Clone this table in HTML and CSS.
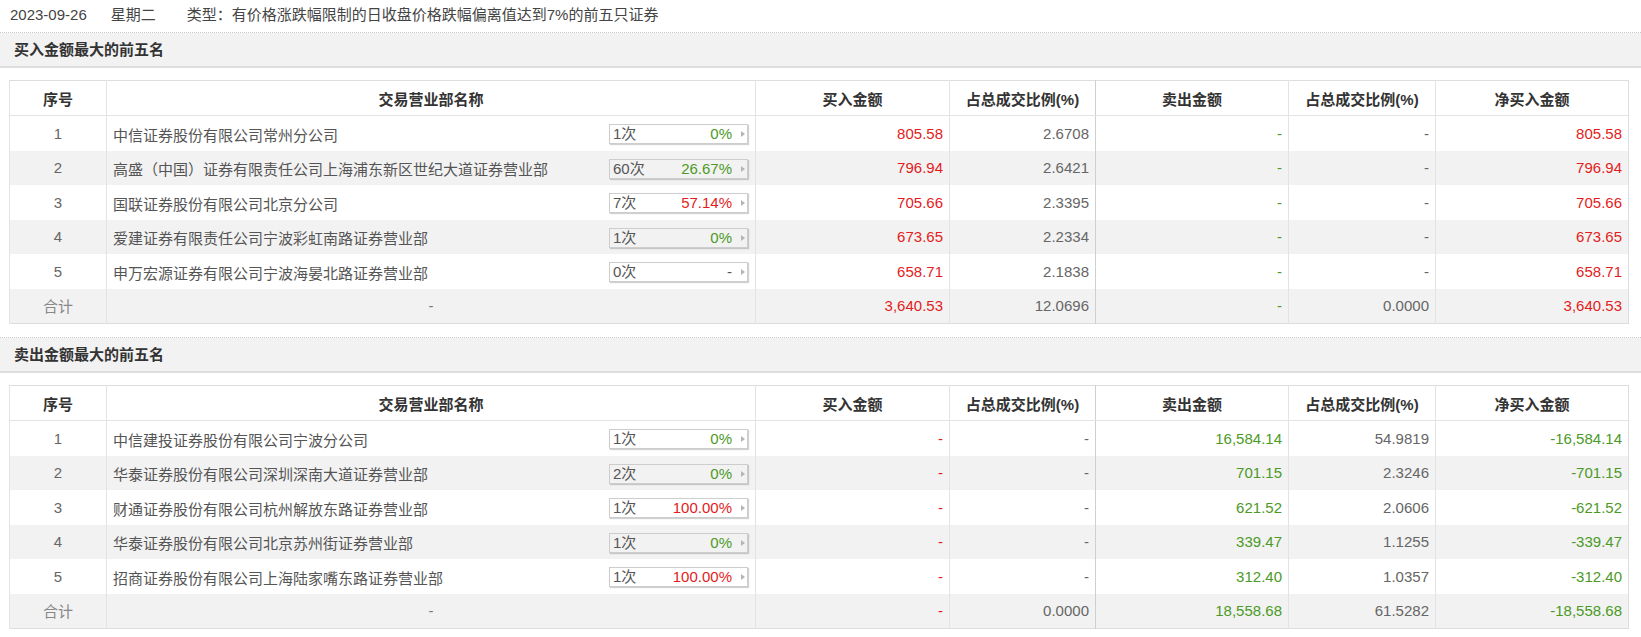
FILE: index.html
```html
<!DOCTYPE html>
<html lang="zh-CN">
<head>
<meta charset="utf-8">
<title>龙虎榜</title>
<link rel="stylesheet" href="styles.css">
</head>
<body>
<div class="topline">
  <span class="date">2023-09-26</span>
  <span class="week">星期二</span>
  <span class="type">类型：有价格涨跌幅限制的日收盘价格跌幅偏离值达到7%的前五只证券</span>
</div>

<section class="section">
  <h2 class="section-title">买入金额最大的前五名</h2>
  <div class="table-wrap">
    <table class="lhb">
      <colgroup>
        <col class="c-no"><col class="c-name"><col class="c-amt"><col class="c-pct"><col class="c-amt2"><col class="c-pct2"><col class="c-net">
      </colgroup>
      <thead>
        <tr><th>序号</th><th>交易营业部名称</th><th>买入金额</th><th class="sep">占总成交比例(%)</th><th>卖出金额</th><th>占总成交比例(%)</th><th>净买入金额</th></tr>
      </thead>
      <tbody>
        <tr>
          <td class="no">1</td>
          <td class="name"><div class="name-in"><span>中信证券股份有限公司常州分公司</span><span class="btn"><span class="cnt">1次</span><span class="rate up-g">0%</span><i class="arr"></i></span></div></td>
          <td class="num red">805.58</td><td class="num sep">2.6708</td><td class="num green">-</td><td class="num">-</td><td class="num red">805.58</td>
        </tr>
        <tr class="alt">
          <td class="no">2</td>
          <td class="name"><div class="name-in"><span>高盛（中国）证券有限责任公司上海浦东新区世纪大道证券营业部</span><span class="btn"><span class="cnt">60次</span><span class="rate up-g">26.67%</span><i class="arr"></i></span></div></td>
          <td class="num red">796.94</td><td class="num sep">2.6421</td><td class="num green">-</td><td class="num">-</td><td class="num red">796.94</td>
        </tr>
        <tr>
          <td class="no">3</td>
          <td class="name"><div class="name-in"><span>国联证券股份有限公司北京分公司</span><span class="btn"><span class="cnt">7次</span><span class="rate up-r">57.14%</span><i class="arr"></i></span></div></td>
          <td class="num red">705.66</td><td class="num sep">2.3395</td><td class="num green">-</td><td class="num">-</td><td class="num red">705.66</td>
        </tr>
        <tr class="alt">
          <td class="no">4</td>
          <td class="name"><div class="name-in"><span>爱建证券有限责任公司宁波彩虹南路证券营业部</span><span class="btn"><span class="cnt">1次</span><span class="rate up-g">0%</span><i class="arr"></i></span></div></td>
          <td class="num red">673.65</td><td class="num sep">2.2334</td><td class="num green">-</td><td class="num">-</td><td class="num red">673.65</td>
        </tr>
        <tr>
          <td class="no">5</td>
          <td class="name"><div class="name-in"><span>申万宏源证券有限公司宁波海晏北路证券营业部</span><span class="btn"><span class="cnt">0次</span><span class="rate">-</span><i class="arr"></i></span></div></td>
          <td class="num red">658.71</td><td class="num sep">2.1838</td><td class="num green">-</td><td class="num">-</td><td class="num red">658.71</td>
        </tr>
        <tr class="alt total">
          <td class="no">合计</td>
          <td class="center">-</td>
          <td class="num red">3,640.53</td><td class="num sep">12.0696</td><td class="num green">-</td><td class="num">0.0000</td><td class="num red">3,640.53</td>
        </tr>
      </tbody>
    </table>
  </div>
</section>

<section class="section">
  <h2 class="section-title">卖出金额最大的前五名</h2>
  <div class="table-wrap">
    <table class="lhb">
      <colgroup>
        <col class="c-no"><col class="c-name"><col class="c-amt"><col class="c-pct"><col class="c-amt2"><col class="c-pct2"><col class="c-net">
      </colgroup>
      <thead>
        <tr><th>序号</th><th>交易营业部名称</th><th>买入金额</th><th class="sep">占总成交比例(%)</th><th>卖出金额</th><th>占总成交比例(%)</th><th>净买入金额</th></tr>
      </thead>
      <tbody>
        <tr>
          <td class="no">1</td>
          <td class="name"><div class="name-in"><span>中信建投证券股份有限公司宁波分公司</span><span class="btn"><span class="cnt">1次</span><span class="rate up-g">0%</span><i class="arr"></i></span></div></td>
          <td class="num red">-</td><td class="num sep">-</td><td class="num green">16,584.14</td><td class="num">54.9819</td><td class="num green">-16,584.14</td>
        </tr>
        <tr class="alt">
          <td class="no">2</td>
          <td class="name"><div class="name-in"><span>华泰证券股份有限公司深圳深南大道证券营业部</span><span class="btn"><span class="cnt">2次</span><span class="rate up-g">0%</span><i class="arr"></i></span></div></td>
          <td class="num red">-</td><td class="num sep">-</td><td class="num green">701.15</td><td class="num">2.3246</td><td class="num green">-701.15</td>
        </tr>
        <tr>
          <td class="no">3</td>
          <td class="name"><div class="name-in"><span>财通证券股份有限公司杭州解放东路证券营业部</span><span class="btn"><span class="cnt">1次</span><span class="rate up-r">100.00%</span><i class="arr"></i></span></div></td>
          <td class="num red">-</td><td class="num sep">-</td><td class="num green">621.52</td><td class="num">2.0606</td><td class="num green">-621.52</td>
        </tr>
        <tr class="alt">
          <td class="no">4</td>
          <td class="name"><div class="name-in"><span>华泰证券股份有限公司北京苏州街证券营业部</span><span class="btn"><span class="cnt">1次</span><span class="rate up-g">0%</span><i class="arr"></i></span></div></td>
          <td class="num red">-</td><td class="num sep">-</td><td class="num green">339.47</td><td class="num">1.1255</td><td class="num green">-339.47</td>
        </tr>
        <tr>
          <td class="no">5</td>
          <td class="name"><div class="name-in"><span>招商证券股份有限公司上海陆家嘴东路证券营业部</span><span class="btn"><span class="cnt">1次</span><span class="rate up-r">100.00%</span><i class="arr"></i></span></div></td>
          <td class="num red">-</td><td class="num sep">-</td><td class="num green">312.40</td><td class="num">1.0357</td><td class="num green">-312.40</td>
        </tr>
        <tr class="alt total">
          <td class="no">合计</td>
          <td class="center">-</td>
          <td class="num red">-</td><td class="num sep">0.0000</td><td class="num green">18,558.68</td><td class="num">61.5282</td><td class="num green">-18,558.68</td>
        </tr>
      </tbody>
    </table>
  </div>
</section>
</body>
</html>
```

FILE: styles.css
```css
html, body {
  margin: 0;
  padding: 0;
  background: #fff;
}
body {
  font-family: "Liberation Sans", "Noto Sans CJK SC", sans-serif;
  font-size: 15px;
  color: #555;
}
.topline {
  height: 32px;
  line-height: 30px;
  padding-left: 10px;
  color: #444;
  display: flex;
  white-space: nowrap;
}
.topline .week {
  margin-left: 24px;
}
.topline .type {
  margin-left: 31px;
}
.section {
  border-top: 1px dotted #c8c8c8;
}
.section-title {
  margin: 0;
  height: 33px;
  line-height: 33px;
  padding-left: 14px;
  background: #f2f2f2;
  border-bottom: 2px solid #ddd;
  font-size: 15px;
  font-weight: bold;
  color: #333;
}
.table-wrap {
  padding: 12px 12px 13px 9px;
}
.lhb {
  width: 100%;
  table-layout: fixed;
  border-collapse: collapse;
  border: 1px solid #ddd;
}
.c-no { width: 97px; }
.c-name { width: 649px; }
.c-amt { width: 194px; }
.c-pct { width: 146px; }
.c-amt2 { width: 193px; }
.c-pct2 { width: 147px; }
.c-net { width: auto; }
.lhb th {
  height: 34px;
  padding: 0;
  font-weight: bold;
  color: #333;
  text-align: center;
  border-left: 1px solid #e3e3e3;
  border-bottom: 1px solid #e3e3e3;
  background: #fff;
}
.lhb td {
  height: 34.5px;
  padding: 0 6px;
  border-left: 1px solid #e3e3e3;
  white-space: nowrap;
  overflow: hidden;
}
.lhb th.sep, .lhb td.sep {
  border-right: 1px solid #cfcfcf;
}
.lhb tr.alt td {
  background: #f2f2f2;
}
.lhb td.no {
  text-align: center;
  color: #666;
}
.lhb tr.total td.no {
  color: #888;
}
.lhb td.center {
  text-align: center;
  color: #777;
}
.lhb td.num {
  text-align: right;
  color: #666;
}
.lhb td.red, .up-r {
  color: #e31c1c;
}
.lhb td.green, .up-g {
  color: #4c9a26;
}
.name-in {
  display: flex;
  align-items: center;
  justify-content: space-between;
  padding-top: 2px;
}
.btn {
  display: flex;
  align-items: center;
  box-sizing: border-box;
  width: 139px;
  height: 20px;
  margin-right: 1px;
  padding: 0 2px 0 3px;
  border: 1px solid #cdcdcd;
  box-shadow: 1px 1px 1px rgba(0, 0, 0, 0.18);
  color: #555;
  line-height: 18px;
}
.btn .cnt {
  flex: 1;
}
.btn .rate {
  margin-right: 9px;
}
.arr {
  display: block;
  width: 0;
  height: 0;
  border-top: 3.5px solid transparent;
  border-bottom: 3.5px solid transparent;
  border-left: 4px solid #b5b5b5;
}
```
